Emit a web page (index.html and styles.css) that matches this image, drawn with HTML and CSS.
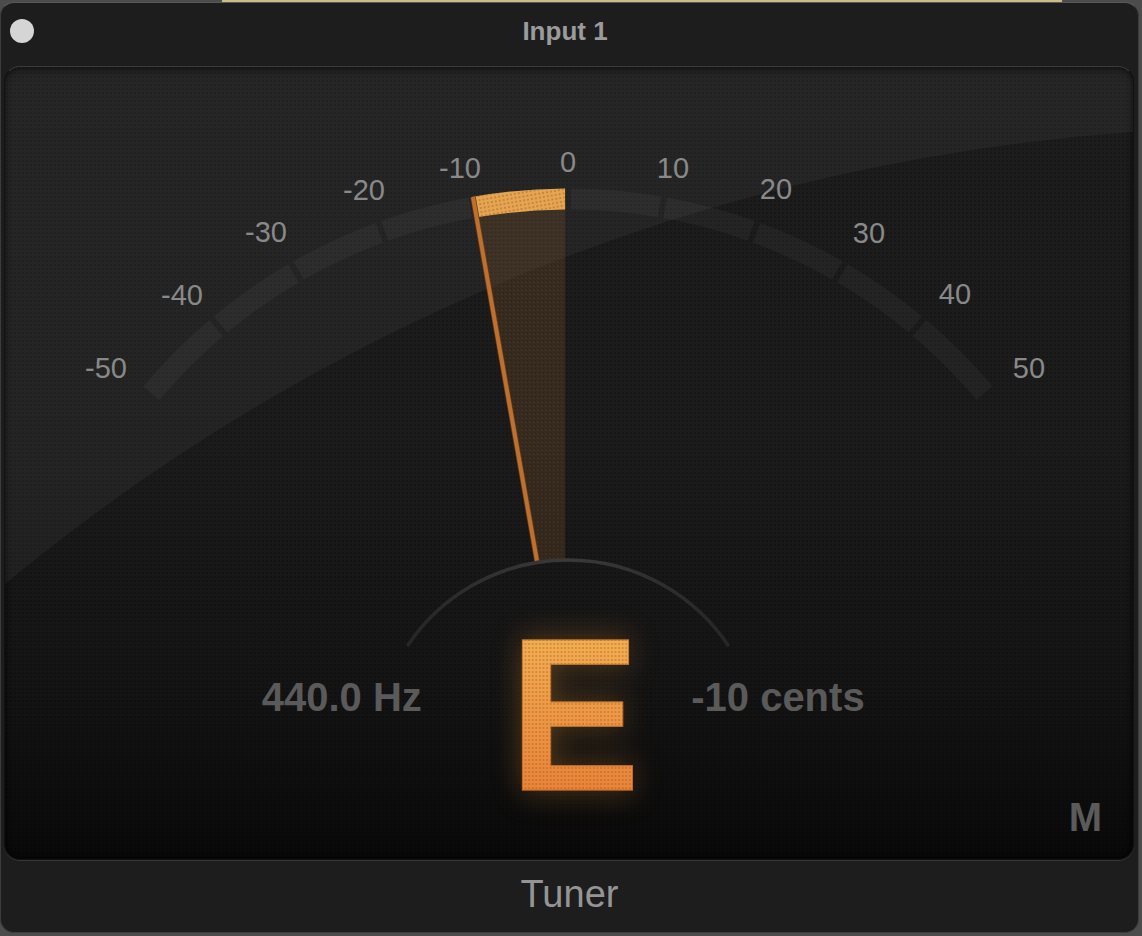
FILE: index.html
```html
<!DOCTYPE html>
<html lang="en">
<head>
    <meta charset="UTF-8">
    <meta name="viewport" content="width=device-width, initial-scale=1.0">
    <title>Tuner</title>
    <link rel="stylesheet" href="styles.css">
</head>
<body>
    <div class="window">
        <header class="titlebar">
            <span class="close-dot"></span>
            <h1 class="title">Input 1</h1>
        </header>

        <main class="display">
            <!-- dial drawn in page coordinates (viewBox = panel padding box) -->
            <svg class="dial" viewBox="5 67 1128 792" aria-hidden="true">
                <defs>
                    <pattern id="dots" width="4" height="4" patternUnits="userSpaceOnUse">
                        <circle cx="2" cy="2" r="0.9" fill="#7a4316"/>
                    </pattern>
                    <linearGradient id="ringFade" x1="407" y1="0" x2="729" y2="0" gradientUnits="userSpaceOnUse">
                        <stop offset="0" stop-color="#262626"/>
                        <stop offset="0.5" stop-color="#3a3a3a"/>
                        <stop offset="1" stop-color="#262626"/>
                    </linearGradient>
                </defs>

                <path class="gloss" d="M5,584 A1986,1986 0 0 1 1133,132 L1133,67 L5,67 Z"/>

                <circle class="scale" cx="568" cy="743" r="544" transform="rotate(-140 568 743)"/>

                <path class="wedge" d="M475,217.6 A533.5,533.5 0 0 1 565.2,209.5 L565.2,559 L537,561 Z"/>
                <path class="wedge-dots" d="M475,217.6 A533.5,533.5 0 0 1 565.2,209.5 L565.2,559 L537,561 Z"/>

                <circle class="bar" cx="568" cy="743" r="544" transform="rotate(-100 568 743)"/>
                <circle class="bar-dots" cx="568" cy="743" r="544" transform="rotate(-100 568 743)"/>

                <line class="needle-edge" x1="473" y1="197" x2="537" y2="561"/>
                <line class="needle" x1="473" y1="197" x2="537" y2="561"/>

                <path class="ring" d="M407.4,646 A193,193 0 0 1 728.6,646"/>

                <text class="tick" x="106" y="378">-50</text>
                <text class="tick" x="182" y="305">-40</text>
                <text class="tick" x="266" y="242">-30</text>
                <text class="tick" x="364" y="200">-20</text>
                <text class="tick" x="460" y="178">-10</text>
                <text class="tick" x="568" y="172">0</text>
                <text class="tick" x="673" y="178">10</text>
                <text class="tick" x="776" y="199">20</text>
                <text class="tick" x="869" y="243">30</text>
                <text class="tick" x="955" y="304">40</text>
                <text class="tick" x="1029" y="378">50</text>
            </svg>

            <div class="readout">
                <span class="freq">440.0 Hz</span>
                <span class="note">E</span>
                <span class="cents">-10 cents</span>
            </div>

            <span class="mode">M</span>
        </main>

        <footer class="footer">Tuner</footer>
    </div>
</body>
</html>
```

FILE: styles.css
```css
* {
    box-sizing: border-box;
}
body {
    margin: 0;
    height: 936px;
    overflow: hidden;
    font-family: "Liberation Sans", Arial, sans-serif;
    background:
        linear-gradient(90deg, transparent 222px, #cbbd8a 222px, #cbbd8a 1062px, transparent 1062px) 0 0 / 100% 3px no-repeat,
        #4c4c4c;
}
.window {
    margin: 2px 3px 0 0;
    height: 931px;
    display: flex;
    flex-direction: column;
    background-color: #1d1d1d;
    border: 1px solid #3c3c3c;
    border-top-color: #595959;
    border-radius: 14px;
}
.titlebar {
    height: 63px;
    display: grid;
    grid-template-columns: 1fr auto 1fr;
    align-items: center;
    padding: 0 18px 8px 9px;
}
.close-dot {
    width: 24px;
    height: 24px;
    border-radius: 50%;
    background-color: #d5d5d5;
}
.title {
    margin: 0;
    font-size: 26px;
    font-weight: bold;
    line-height: 1;
    color: #9b9b9b;
}
.display {
    position: relative;
    height: 794px;
    margin: 0 4px 0 3px;
    padding-top: 539px;
    border: 1px solid #111;
    border-top-color: #3a3a3a;
    border-radius: 16px;
    overflow: hidden;
    background:
        radial-gradient(circle, rgba(0,0,0,0.2) 0.9px, transparent 1.3px) 0 0 / 4px 4px,
        linear-gradient(180deg, #1d1d1d 0%, #1b1b1b 50%, #141414 78%, #090909 100%);
    box-shadow: 0 1px 0 #363636, inset 0 0 6px rgba(0,0,0,0.7), inset 0 7px 8px -5px rgba(0,0,0,0.5);
}
.dial {
    position: absolute;
    left: 0;
    top: 0;
    width: 1128px;
    height: 792px;
}
.gloss {
    fill: rgba(255,255,255,0.045);
}
.scale {
    fill: none;
    stroke: rgba(255,255,255,0.04);
    stroke-width: 21;
    stroke-dasharray: 92.1 5.7 89.2 5.7 89.2 5.7 89.2 5.7 89.2 5.7 89.2 5.7 89.2 5.7 89.2 5.7 89.2 5.7 92.1 3000;
}
.bar {
    fill: none;
    stroke: #e6a551;
    stroke-width: 21;
    stroke-dasharray: 92.1 4000;
}
.bar-dots {
    fill: none;
    stroke: url(#dots);
    stroke-width: 21;
    stroke-dasharray: 92.1 4000;
    opacity: 0.45;
}
.wedge {
    fill: rgba(105,75,45,0.32);
}
.wedge-dots {
    fill: url(#dots);
    opacity: 0.25;
}
.needle-edge {
    stroke: #6e3c15;
    stroke-width: 5.5;
}
.needle {
    stroke: #bd7130;
    stroke-width: 4;
}
.ring {
    fill: none;
    stroke: url(#ringFade);
    stroke-width: 3.5;
}
.tick {
    font-family: "Liberation Sans", Arial, sans-serif;
    font-size: 29px;
    fill: #898989;
    text-anchor: middle;
}
.readout {
    position: relative;
    display: grid;
    grid-template-columns: 1fr auto 1fr;
    align-items: start;
    padding-left: 11px;
}
.freq,
.cents {
    margin-top: 71px;
    font-size: 40px;
    font-weight: bold;
    line-height: 1;
    color: #5a5a5a;
}
.freq {
    text-align: right;
    padding-right: 80px;
}
.cents {
    text-align: left;
    padding-left: 44px;
}
.note {
    font-size: 218px;
    font-weight: bold;
    line-height: 1;
    color: transparent;
    background:
        radial-gradient(circle, rgba(150,70,10,0.3) 0.9px, transparent 1.3px) 0 0 / 4px 4px,
        linear-gradient(180deg, #f2ae53 14%, #e8843a 85%);
    -webkit-background-clip: text;
    background-clip: text;
    -webkit-text-stroke: 1px rgba(170,95,30,0.6);
    transform: scaleX(0.9);
    filter: drop-shadow(0 0 16px rgba(225,140,50,0.35));
}
.mode {
    position: absolute;
    right: 31px;
    bottom: 22px;
    font-size: 40px;
    font-weight: bold;
    line-height: 1;
    color: #5b5b5b;
}
.footer {
    flex: 1;
    padding-top: 15px;
    text-align: center;
    font-size: 38px;
    line-height: 1;
    color: #959595;
}
```
